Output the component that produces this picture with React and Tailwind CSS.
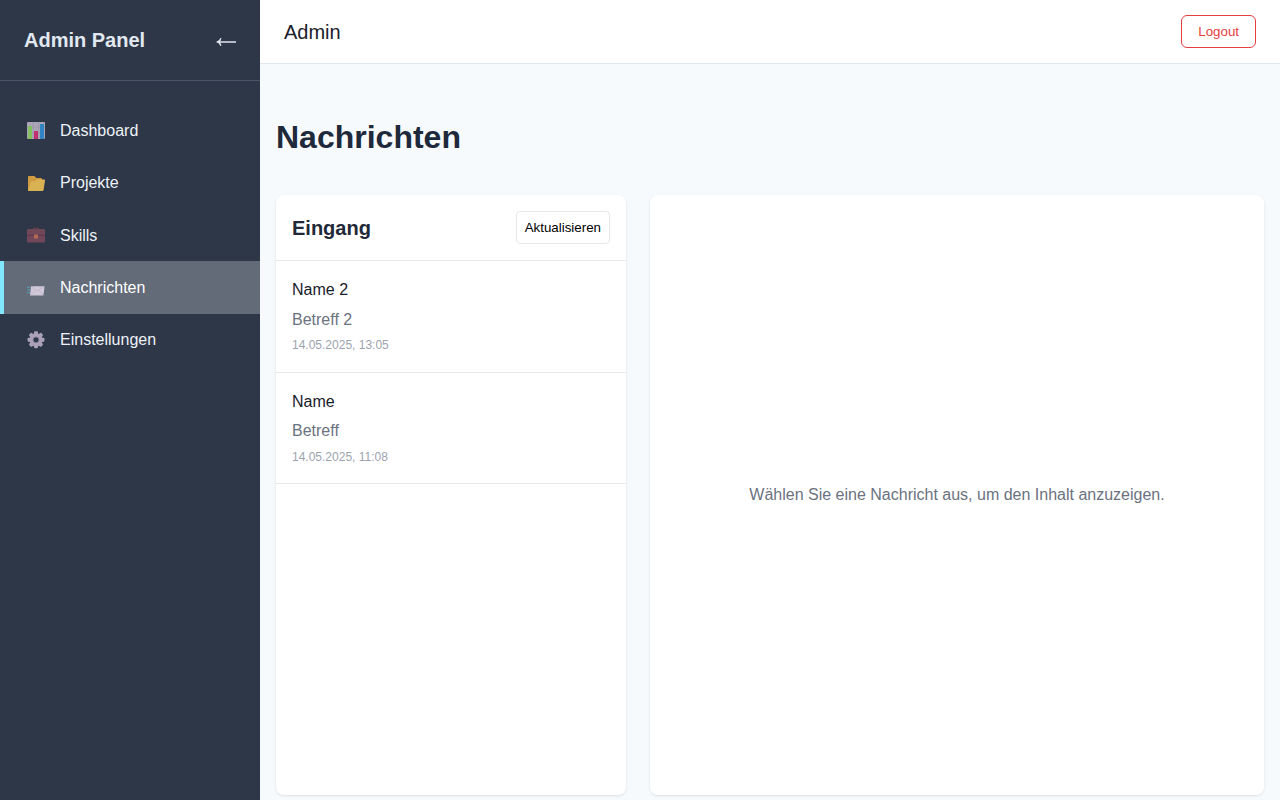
import React from 'react';

function ChartIcon() {
  return (
    <svg width="18" height="18" viewBox="0 0 18 18">
      <rect x="0" y="0" width="18" height="17" rx="1" fill="#aaa6b7" />
      <path d="M6.2 0v17M11.5 0v17M0 5h18M0 11h18" stroke="#9794a6" strokeWidth=".6" />
      <rect x="1.2" y="4" width="3.8" height="13" fill="#83c15d" />
      <rect x="7" y="9" width="4" height="8" fill="#c22f71" />
      <rect x="13" y="2" width="4" height="15" fill="#3285c4" />
    </svg>
  );
}

function FolderIcon() {
  return (
    <svg width="18" height="18" viewBox="0 0 18 18">
      <path d="M1 2.6Q1 2 1.8 2h5.7L9.3 4H14q1 0 1 1v12H1z" fill="#d09a40" />
      <path d="M1.2 17 3.8 8Q4.1 7.2 5 7.2h3l1.6-1.7h7.6q.9 0 .8.9l-1.4 9.4q-.2 1.2-1.3 1.2z" fill="#d9b253" />
    </svg>
  );
}

function BriefcaseIcon() {
  return (
    <svg width="18" height="18" viewBox="0 0 18 18">
      <path d="M6.7 4V3q0-1 1-1h2.6q1 0 1 1v1" fill="none" stroke="#6b434e" strokeWidth="1.2" />
      <rect x="0" y="3" width="18" height="13.5" rx="1" fill="#704858" />
      <path d="M0 9.2h18" stroke="#59324f" strokeWidth="1" />
      <rect x="7" y="8.5" width="4" height="4" rx=".5" fill="#b66a54" />
    </svg>
  );
}

function MailIcon() {
  return (
    <svg width="18" height="18" viewBox="0 0 18 18">
      <path d="M4 7.2h13.6l-1.2 9.3H3z" fill="#d0c8d8" />
      <path d="m4.2 7.4 5.8 4.7 7.2-4.7M3.2 16.3l5.5-5M16.3 16.3l-4.3-5" fill="none" stroke="#bcb0cb" strokeWidth=".6" />
      <path d="M0 8.3h3.5M.5 10.9h3M0 13.7h3" stroke="#58a0b8" strokeWidth="1.1" />
    </svg>
  );
}

function GearIcon() {
  return (
    <svg width="18" height="18" viewBox="0 0 18 18">
      <g fill="#aaa1b8">
        <rect x="7" y=".3" width="4" height="17" rx="1.2" />
        <rect x="7" y=".3" width="4" height="17" rx="1.2" transform="rotate(45 9 8.8)" />
        <rect x="7" y=".3" width="4" height="17" rx="1.2" transform="rotate(90 9 8.8)" />
        <rect x="7" y=".3" width="4" height="17" rx="1.2" transform="rotate(135 9 8.8)" />
        <circle cx="9" cy="8.8" r="6.6" />
      </g>
      <circle cx="9" cy="8.8" r="2.9" fill="#2d3748" stroke="#85809a" strokeWidth=".9" />
    </svg>
  );
}

const navItems = [
  { label: 'Dashboard', Icon: ChartIcon },
  { label: 'Projekte', Icon: FolderIcon },
  { label: 'Skills', Icon: BriefcaseIcon },
  { label: 'Nachrichten', Icon: MailIcon, active: true },
  { label: 'Einstellungen', Icon: GearIcon },
];

const messages = [
  { name: 'Name 2', subject: 'Betreff 2', date: '14.05.2025, 13:05' },
  { name: 'Name', subject: 'Betreff', date: '14.05.2025, 11:08' },
];

export default function App() {
  return (
    <div className="flex h-screen overflow-hidden bg-[#f7fafc] font-['Liberation_Sans',Arial,sans-serif] text-base leading-[1.6] text-[#1a202c]">
      <aside className="w-[260px] shrink-0 bg-[#2d3748] text-[#edf2f7]">
        <div className="flex h-[81px] items-center justify-between border-b border-[#4a5568] px-6">
          <h2 className="text-xl font-bold text-[#e2e8f0]">Admin Panel</h2>
          <button className="text-[#cbd2dc]" aria-label="Menü einklappen">
            <svg width="20" height="10" viewBox="0 0 20 10" className="mt-1" fill="none">
              <path d="M3 5h17" stroke="currentColor" strokeWidth="1.7" />
              <path d="M0 5Q3.6 3.8 4.4 1h1Q4.9 3.4 4 5q.9 1.6 1.4 4h-1Q3.6 6.200 0 5z" fill="#e2e8f0" />
            </svg>
          </button>
        </div>
        <nav className="pt-[23.7px]">
          {navItems.map(({ label, Icon, active }) => (
            <a
              key={label}
              className={
                active
                  ? 'flex h-[52.25px] items-center border-l-4 border-[#81e6ff] bg-[#636b78] pl-[23px] text-white'
                  : 'flex h-[52.25px] items-center pl-[27px]'
              }
            >
              <Icon />
              <span className="ml-[15px]">{label}</span>
            </a>
          ))}
        </nav>
      </aside>

      <div className="flex min-w-0 flex-1 flex-col">
        <header className="flex h-16 shrink-0 items-center justify-between border-b border-[#e2e8f0] bg-white px-6">
          <span className="text-xl">Admin</span>
          <button className="h-[33px] rounded-md border border-[#e53e3e] px-4 text-[13.333px] leading-normal text-[#e53e3e]">
            Logout
          </button>
        </header>

        <main className="px-4 pt-12">
          <h1 className="text-[32px] leading-[1.6] font-bold text-[#1e293b]">Nachrichten</h1>
          <div className="mt-8 flex h-[600px] gap-6">
            <section className="w-[350px] shrink-0 rounded-lg bg-white shadow-[0_1px_3px_rgba(0,0,0,0.1)]">
              <div className="flex h-[66px] items-center justify-between border-b border-[#e5e7eb] px-4">
                <h2 className="text-xl font-bold text-[#1f2937]">Eingang</h2>
                <button className="h-[33px] rounded border border-[#e5e7eb] px-2 text-[13.333px] leading-normal text-black">
                  Aktualisieren
                </button>
              </div>
              {messages.map((m) => (
                <article key={m.date} className="border-b border-[#e5e7eb] p-4">
                  <div className="mb-1">{m.name}</div>
                  <div className="mb-1 text-[#6b7280]">{m.subject}</div>
                  <div className="text-xs leading-[1.6] text-[#9ca3af]">{m.date}</div>
                </article>
              ))}
            </section>
            <section className="flex flex-1 items-center justify-center rounded-lg bg-white text-[#6b7280] shadow-[0_1px_3px_rgba(0,0,0,0.1)]">
              Wählen Sie eine Nachricht aus, um den Inhalt anzuzeigen.
            </section>
          </div>
        </main>
      </div>
    </div>
  );
}
